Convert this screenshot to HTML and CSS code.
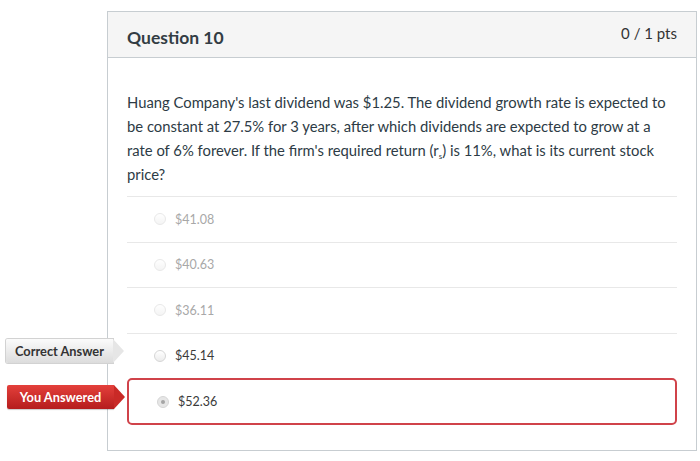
FILE: index.html
```html
<!DOCTYPE html>
<html>
<head>
<meta charset="utf-8">
<link rel="stylesheet" href="styles.css">
</head>
<body>
<div class="card">
  <div class="card-header">
    <h2 class="title">Question 10</h2>
    <span class="pts">0 / 1 pts</span>
  </div>
  <div class="card-body">
    <p class="question">Huang Company's last dividend was $1.25. The dividend growth rate is expected to be constant at 27.5% for 3 years, after which dividends are expected to grow at a rate of 6% forever. If the firm's required return (r<sub>s</sub>) is 11%, what is its current stock price?</p>
    <div class="answers">
      <div class="answer muted"><span class="radio"></span><span class="atext">$41.08</span></div>
      <div class="answer muted"><span class="radio"></span><span class="atext">$40.63</span></div>
      <div class="answer muted"><span class="radio"></span><span class="atext">$36.11</span></div>
      <div class="answer correct"><span class="tag tag-correct">Correct Answer</span><span class="radio"></span><span class="atext">$45.14</span></div>
      <div class="answer wrong"><span class="tag tag-wrong">You Answered</span><span class="radio checked"></span><span class="atext">$52.36</span></div>
    </div>
  </div>
</div>
</body>
</html>
```

FILE: styles.css
```css
html, body {
  margin: 0;
  padding: 0;
  background: #ffffff;
}
body {
  font-family: Lato, "Open Sans", "Liberation Sans", sans-serif;
  color: #2d3b45;
  padding: 11px 3px 0 107px;
  width: 590px;
}
.card {
  border: 1px solid #c7cdd1;
  height: 438px;
  background: #fff;
}
.card-header {
  background: #f5f5f5;
  border-bottom: 1px solid #c7cdd1;
  height: 45px;
  display: flex;
  justify-content: space-between;
  padding: 0 19px 0 19px;
}
.title {
  margin: 0;
  font-size: 17.5px;
  font-weight: 700;
  color: #333d44;
  line-height: 20px;
  padding-top: 16px;
}
.pts {
  font-size: 15px;
  color: #333;
  line-height: 18px;
  padding-top: 12px;
}
.card-body {
  padding: 32px 19px 0 19px;
}
.question {
  margin: 0 0 10px 0;
  font-size: 14.8px;
  line-height: 24px;
  color: #2d3b45;
  max-width: 545px;
}
.question sub {
  font-size: 8px;
  line-height: 0;
  vertical-align: -3px;
}
.answers {
  display: flex;
  flex-direction: column;
}
.answer {
  position: relative;
  display: flex;
  align-items: center;
  height: 44.5px;
  border-top: 1px solid #e8e8e8;
  padding-left: 27px;
  font-size: 12.5px;
}
.answer.muted .atext { color: #a8a8a8; }
.answer.muted .radio { opacity: 0.55; }
.answer.correct .atext { color: #3a3a3a; }
.answer.wrong {
  border: 2px solid #d0434a;
  border-radius: 5px;
  height: 43px;
  padding-left: 28px;
}
.answer.wrong .atext { color: #3a3a3a; }
.radio {
  width: 12px;
  height: 12px;
  border-radius: 50%;
  border: 1px solid #d6d6d6;
  background: linear-gradient(#ffffff, #ececec);
  margin-right: 9px;
  box-sizing: border-box;
  position: relative;
}
.radio.checked {
  background: #e6e6e6;
}
.radio.checked::after {
  content: "";
  position: absolute;
  left: 3px;
  top: 3px;
  width: 4px;
  height: 4px;
  border-radius: 50%;
  background: #a5a5a5;
}
.tag {
  position: absolute;
  left: -121px;
  height: 24px;
  width: 107px;
  box-sizing: border-box;
  display: flex;
  align-items: center;
  justify-content: center;
  font-size: 12.8px;
  font-weight: 700;
  border-radius: 2px 0 0 2px;
}
.tag::after {
  content: "";
  position: absolute;
  right: -11px;
  top: 0;
  width: 0;
  height: 0;
  border-top: 12px solid transparent;
  border-bottom: 12px solid transparent;
  border-left: 11px solid;
}
.tag-correct {
  top: 5px;
  color: #333;
  background: linear-gradient(#fbfbfb, #dcdcdc);
  box-shadow: 0 0 0 1px #d2d2d2;
}
.tag-correct::after {
  border-left-color: #e6e6e6;
}
.tag-wrong {
  top: 5px;
  left: -122px;
  color: #fff;
  background: linear-gradient(#e4403b, #b51d1d);
  box-shadow: 0 1px 1px rgba(0,0,0,0.2);
}
.tag-wrong::after {
  border-left-color: #c92a27;
}
```
